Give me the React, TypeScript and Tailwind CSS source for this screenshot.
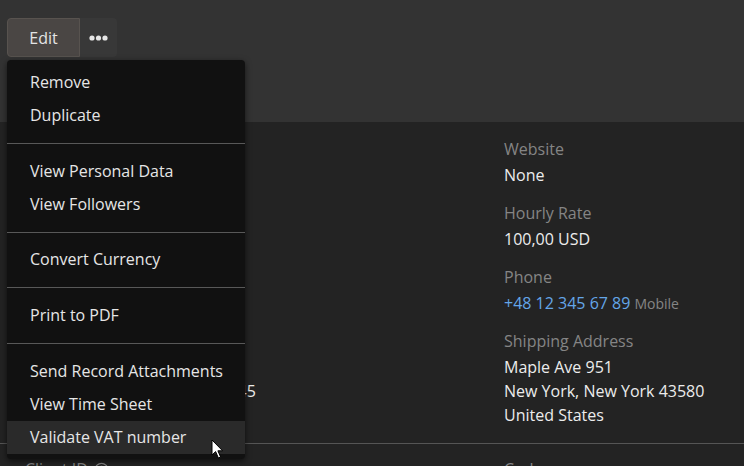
import { CircleHelp } from 'lucide-react';

const menuGroups = [
  ['Remove', 'Duplicate'],
  ['View Personal Data', 'View Followers'],
  ['Convert Currency'],
  ['Print to PDF'],
  ['Send Record Attachments', 'View Time Sheet', 'Validate VAT number'],
];

const hovered = 'Validate VAT number';

function Field({ label, children, first }: { label: string; children: React.ReactNode; first?: boolean }) {
  return (
    <div className={first ? '' : 'mt-[14px]'}>
      <div className="text-[16px] leading-[24px] text-[#858585]">{label}</div>
      <div className="mt-[2px] text-[16px] leading-[24px] text-[#ececec]">{children}</div>
    </div>
  );
}

function Cursor() {
  return (
    <svg width="14" height="21" viewBox="0 0 14 21" className="absolute left-[211px] top-[439px]">
      <path
        d="M1 1 L1 16 L4.6 12.6 L7.4 19 L9.6 18 L6.9 11.8 L11.6 11.8 Z"
        fill="#ffffff"
        stroke="#000000"
        strokeWidth="1"
        strokeLinejoin="round"
      />
    </svg>
  );
}

export default function App() {
  return (
    <div className="relative w-[744px] h-[466px] overflow-hidden bg-[#232323] font-['Open_Sans',sans-serif]">
      <header className="h-[122px] bg-[#333333] pt-[18px] pl-[7px]">
        <div className="flex h-[39px]">
          <button className="w-[73px] rounded-l-[4px] border border-[#58534f] bg-[#4a4644] text-[16px] text-[#e4e4e4]">
            Edit
          </button>
          <button className="flex w-[37px] items-center justify-center rounded-r-[4px] bg-[#383838]">
            <svg width="19" height="6" viewBox="0 0 19 6">
              <circle cx="3" cy="3" r="2.6" fill="#e6e6e6" />
              <circle cx="9.5" cy="3" r="2.6" fill="#e6e6e6" />
              <circle cx="16" cy="3" r="2.6" fill="#e6e6e6" />
            </svg>
          </button>
        </div>
      </header>

      <main className="flex h-[321px] pt-[15px]">
        <div className="w-[479px] pl-[25px]">
          <Field label="Email" first>
            john.doe@example.com
          </Field>
          <Field label="Contact Person">John Doe</Field>
          <Field label="Billing Phone">+48 22 123 45 67</Field>
          <Field label="Bank Account">
            <div>PKO Bank Polski</div>
            <div className="whitespace-nowrap pl-[5px]">PL 12 1090 1014 0000 0712 45</div>
          </Field>
        </div>
        <div className="flex-1 pl-[25px]">
          <Field label="Website" first>
            None
          </Field>
          <Field label="Hourly Rate">100,00 USD</Field>
          <Field label="Phone">
            <div className="flex h-[24px] items-baseline gap-[4px]">
              <span className="text-[#64a6e8]">+48 12 345 67 89</span>
              <span className="text-[14px] text-[#858585]">Mobile</span>
            </div>
          </Field>
          <Field label="Shipping Address">
            <div>Maple Ave 951</div>
            <div>New York, New York 43580</div>
            <div>United States</div>
          </Field>
        </div>
      </main>

      <div className="h-px bg-[#555555]" />

      <div className="flex pt-[13px] text-[16px] leading-[24px] text-[#858585]">
        <div className="flex w-[479px] items-center gap-[6px] pl-[25px]">
          Client ID <CircleHelp className="h-[15px] w-[15px]" />
        </div>
        <div className="pl-[25px]">Code</div>
      </div>

      <div className="absolute left-[7px] top-[60px] w-[238px] rounded-[4px] bg-[#111111] pt-[6px] pb-[5px] shadow-[0_2px_6px_rgba(0,0,0,0.6)]">
        {menuGroups.map((group, gi) => (
          <div key={gi}>
            {gi > 0 && <div className="mt-[11px] mb-[10.67px] h-px bg-[#585858]" />}
            {group.map((item) => (
              <div
                key={item}
                className={`flex h-[33px] items-center pb-[1px] pl-[23px] text-[16px] text-[#e6e6e6] ${
                  item === hovered ? 'bg-[#2a2a2a]' : ''
                }`}
              >
                {item}
              </div>
            ))}
          </div>
        ))}
      </div>

      <Cursor />
    </div>
  );
}
